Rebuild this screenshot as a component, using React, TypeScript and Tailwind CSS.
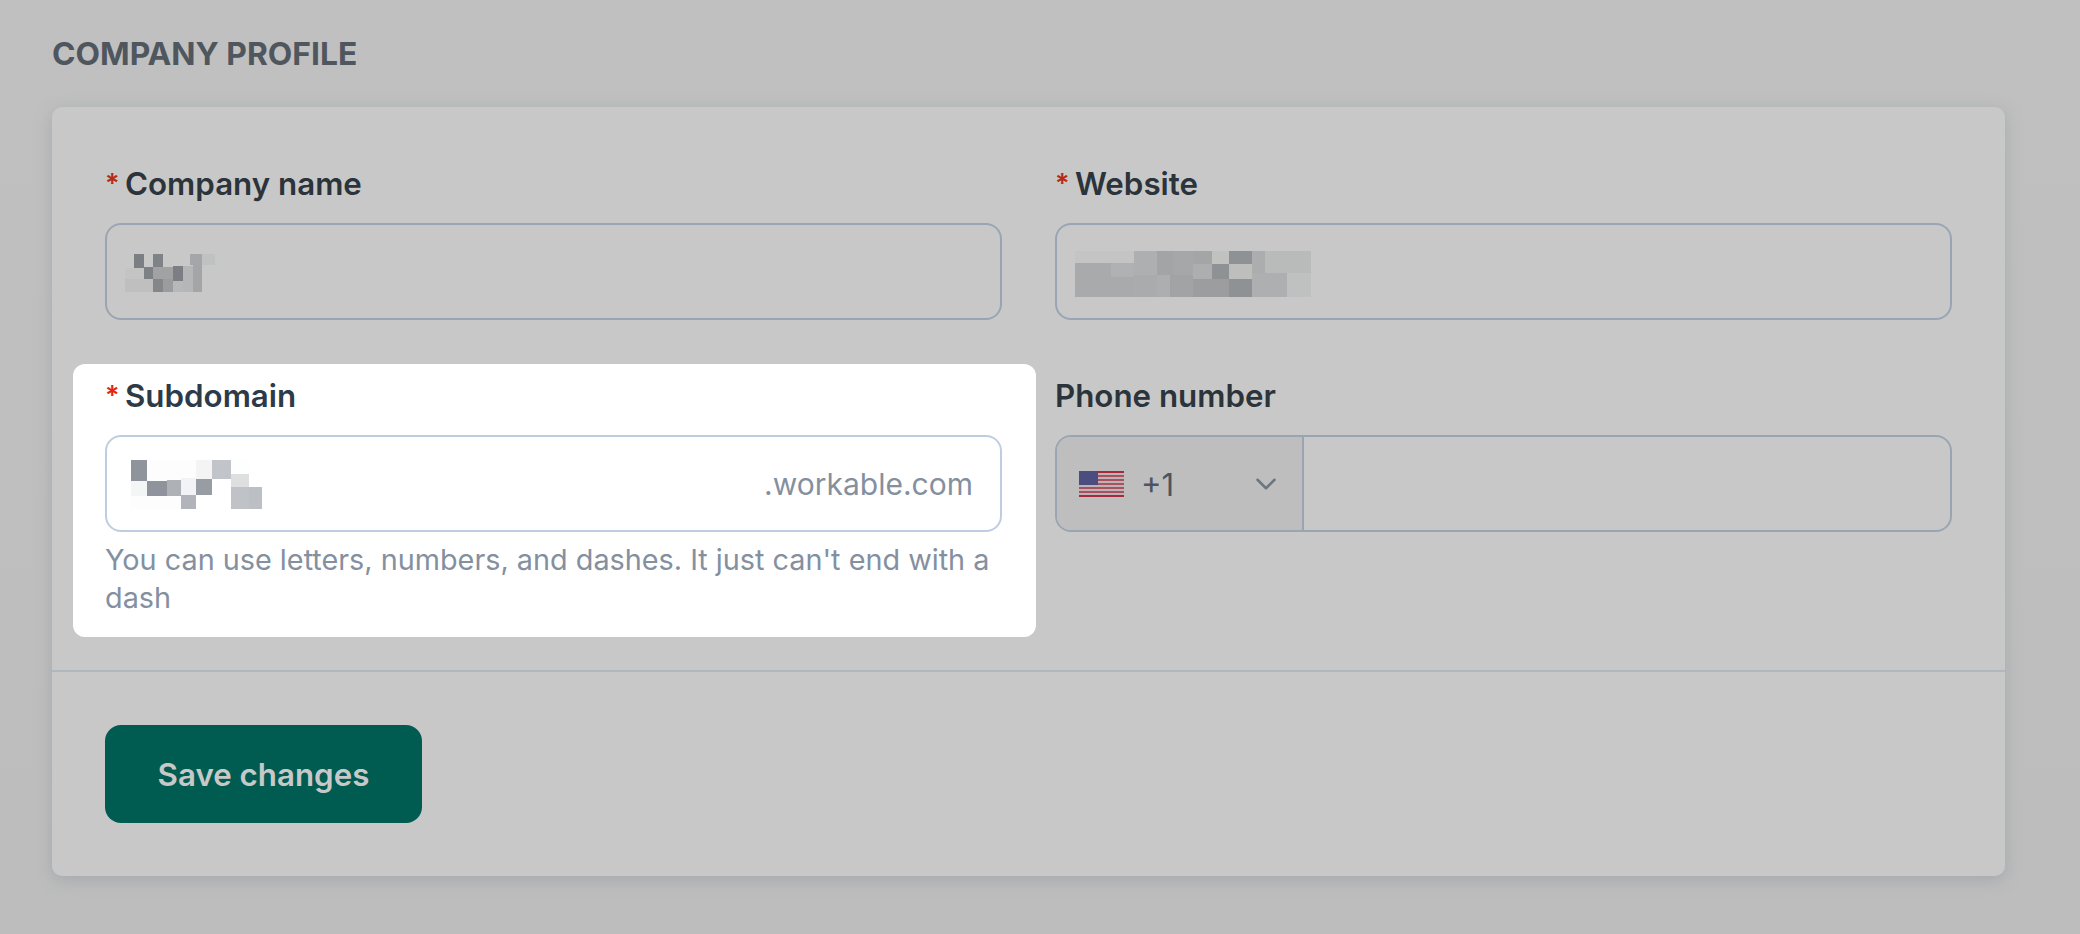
import { ChevronDown } from "lucide-react";

type Block = [number, number, number, number, string];

// pixelated blocks that hide the real values, coords measured from the reference
const companyBlocks: Block[] = [
  [9, 0, 19, 14, "#7b7f83"],
  [28, 0, 38, 13, "#7f8387"],
  [65, 0, 77, 11, "#a4a6a9"],
  [77, 0, 90, 11, "#c0c2c1"],
  [19, 13, 28, 25, "#7d8186"],
  [28, 13, 48, 25, "#a0a2a4"],
  [48, 12, 58, 27, "#7b7f84"],
  [58, 12, 68, 38, "#b4b6b8"],
  [68, 11, 77, 38, "#a3a5a7"],
  [0, 14, 19, 25, "#c4c4c4"],
  [0, 25, 28, 38, "#bebfbe"],
  [28, 25, 38, 38, "#84878a"],
  [38, 25, 48, 38, "#9a9c9e"],
  [48, 27, 58, 38, "#b6b8ba"],
];

const websiteBlocks: Block[] = [
  [0, 0, 59, 12, "#c4c4c4"],
  [59, 0, 82, 24, "#aeafb0"],
  [82, 0, 98, 24, "#a3a4a6"],
  [98, 0, 118, 24, "#a6a7a8"],
  [118, 0, 137, 13, "#a4a5a7"],
  [137, 0, 154, 13, "#c0c2c0"],
  [154, 0, 177, 13, "#8f9295"],
  [177, 0, 190, 22, "#acadaf"],
  [190, 0, 236, 22, "#b9bbba"],
  [0, 12, 36, 46, "#a9aaab"],
  [36, 12, 59, 26, "#b0b1b2"],
  [36, 26, 59, 46, "#a9aaab"],
  [59, 24, 82, 46, "#aaabac"],
  [82, 24, 95, 46, "#adaeaf"],
  [95, 24, 118, 46, "#a2a3a5"],
  [118, 13, 137, 28, "#adaeaf"],
  [137, 13, 154, 28, "#8f9295"],
  [154, 13, 177, 28, "#bdbfbd"],
  [118, 28, 154, 46, "#9c9d9f"],
  [154, 28, 177, 46, "#8f9295"],
  [177, 22, 212, 46, "#aeafb0"],
  [212, 22, 236, 46, "#bfc1c0"],
];

const subdomainBlocks: Block[] = [
  [0, 0, 16, 21, "#8f949c"],
  [16, 0, 65, 21, "#fdfdfd"],
  [65, 0, 81, 19, "#f4f4f4"],
  [81, 0, 100, 19, "#c1c5c9"],
  [100, 0, 118, 14, "#fdfefe"],
  [0, 21, 16, 36, "#f4f6f6"],
  [16, 21, 36, 36, "#8f949c"],
  [36, 20, 50, 36, "#aeb2b7"],
  [50, 18, 65, 35, "#f1f3f6"],
  [65, 19, 81, 35, "#989da3"],
  [100, 14, 118, 27, "#dddfe1"],
  [100, 27, 118, 49, "#bfc3c7"],
  [118, 27, 131, 49, "#bcc0c4"],
  [50, 35, 65, 49, "#b1b4ba"],
  [0, 36, 50, 49, "#fdfdfd"],
];

function Mosaic({ blocks, w, h, className }: { blocks: Block[]; w: number; h: number; className?: string }) {
  return (
    <svg width={w} height={h} viewBox={`0 0 ${w} ${h}`} shapeRendering="crispEdges" className={className}>
      {blocks.map(([x0, y0, x1, y1, fill], i) => (
        <rect key={i} x={x0} y={y0} width={x1 - x0} height={y1 - y0} fill={fill} />
      ))}
    </svg>
  );
}

function UsFlag() {
  const stripes = Array.from({ length: 13 }, (_, i) => i);
  return (
    <svg width="45" height="26" viewBox="0 0 45 26" className="shrink-0 mt-[1px]">
      <rect width="45" height="26" fill="#bfb2b6" />
      {stripes
        .filter((i) => i % 2 === 0)
        .map((i) => (
          <rect key={i} y={i * 2} width="45" height="2" fill={i === 0 || i === 12 ? "#a52a3c" : "#a85260"} />
        ))}
      <rect width="19" height="14" fill="#4b4d80" />
    </svg>
  );
}

function Label({ text, required, dark }: { text: string; required?: boolean; dark?: boolean }) {
  return (
    <div className={`flex items-start h-[38px] mb-[20px] text-[31.3px] leading-[38px] font-semibold ${dark ? "text-[#2d3a47]" : "text-[#2b333b]"}`}>
      {required && (
        <span className={`w-[20px] text-[27px] ${dark ? "text-[#e0290c]" : "text-[#b72c10]"}`}>*</span>
      )}
      <span>{text}</span>
    </div>
  );
}

export default function App() {
  return (
    <div className="w-[2080px] h-[934px] overflow-hidden bg-gradient-to-b from-[#c0c0c0] to-[#bdbdbd] px-[52px] pt-[35px] font-['Inter',sans-serif]">
      <h1 className="h-[38px] mb-[34px] text-[31.8px] leading-[38px] font-bold text-[#4f565e] uppercase">Company profile</h1>

      <div className="w-[1953px] rounded-[10px] bg-[#c8c8c8] shadow-[0_4px_16px_rgba(120,130,140,0.35)]">
        <div className="grid grid-cols-2 gap-x-[53px] gap-y-[57px] px-[53px] pt-[58px] pb-[53px] items-start">
          <div>
            <Label text="Company name" required />
            <div className="h-[97px] flex items-center border-2 border-[#9aa5b4] rounded-[16px] pl-[18px]">
              <Mosaic blocks={companyBlocks} w={90} h={38} className="mt-[3px]" />
            </div>
          </div>
          <div>
            <Label text="Website" required />
            <div className="h-[97px] flex items-center border-2 border-[#9aa5b4] rounded-[16px] pl-[18px]">
              <Mosaic blocks={websiteBlocks} w={236} h={46} className="mt-[5px]" />
            </div>
          </div>

          {/* highlighted field */}
          <div className="bg-white rounded-[12px] ml-[-32px] mr-[-34px] pl-[32px] pr-[34px] mt-[-13px] pt-[13px] mb-[-20px] pb-[20px]">
            <Label text="Subdomain" required dark />
            <div className="h-[97px] flex items-center justify-between border-2 border-[#c0cde0] rounded-[16px] pl-[24px] pr-[27px]">
              <Mosaic blocks={subdomainBlocks} w={131} h={49} className="mt-[1px]" />
              <span className="pt-[2px] text-[30px] text-[#8490a0]">.workable.com</span>
            </div>
            <p className="mt-[9px] text-[28.8px] leading-[38px] text-[#8490a0]">
              You can use letters, numbers, and dashes. It just can't end with a dash
            </p>
          </div>

          <div>
            <Label text="Phone number" />
            <div className="h-[97px] flex border-2 border-[#9aa5b4] rounded-[16px] overflow-hidden">
              <div className="w-[247px] flex items-center bg-[#bebebe] border-r-2 border-[#9aa5b4] pl-[22px] pr-[19px]">
                <UsFlag />
                <span className="ml-[17px] pt-[3px] text-[31px] text-[#4d5560]">+1</span>
                <ChevronDown className="ml-auto w-[34px] h-[34px] text-[#6d7680]" strokeWidth={1.8} />
              </div>
              <div className="flex-1" />
            </div>
          </div>
        </div>

        <div className="border-t-2 border-[#b1b7be] p-[53px]">
          <button className="w-[317px] h-[98px] pt-[2px] rounded-[16px] bg-[#005c50] text-[31.3px] font-semibold text-[#c8c8c8]">
            Save changes
          </button>
        </div>
      </div>
    </div>
  );
}
